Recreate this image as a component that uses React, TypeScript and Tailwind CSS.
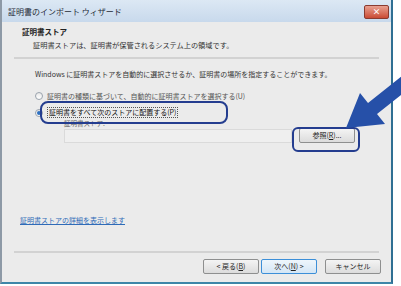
import React from 'react'

const font = { fontFamily: '"Noto Sans CJK JP", "Liberation Sans", sans-serif' }

function Radio({ checked }: { checked?: boolean }) {
  return (
    <span className="flex h-[8px] w-[8px] shrink-0 items-center justify-center rounded-full border border-[#9aa3ad] bg-gradient-to-b from-[#e8e8e8] to-white">
      {checked && <span className="h-[4px] w-[4px] rounded-full bg-[#2d6fc0]" />}
    </span>
  )
}

function Btn({ children, focus }: { children: React.ReactNode; focus?: boolean }) {
  return (
    <div
      className={
        'flex h-[15px] w-[56px] items-center justify-center rounded-[2px] border text-[7px] text-[#222] ' +
        (focus
          ? 'border-[#3c8fd8] bg-gradient-to-b from-[#eef6fc] to-[#d4e6f5]'
          : 'border-[#8e8f8f] bg-gradient-to-b from-[#f4f4f4] to-[#dcdcdc]')
      }
    >
      {children}
    </div>
  )
}

export default function App() {
  return (
    <div className="relative h-[286px] w-[401px] overflow-hidden bg-white" style={font}>
      <div className="flex h-[284px] w-[393px] flex-col border-b-2 border-l-2 border-r-2 border-b-[#3e86a8] border-l-[#8d99a6] border-r-[#2f6f93] bg-[#ebebeb]">
        {/* title bar */}
        <div className="flex h-[22px] shrink-0 items-center justify-between bg-gradient-to-b from-[#dce8f4] to-[#c8d9ec] pl-[6px] pr-[2px] pt-[2px]">
          <span className="text-[8px] text-[#1e2a36]">証明書のインポート ウィザード</span>
          <div className="flex h-[14px] w-[25px] items-center justify-center rounded-[2px] border border-[#8a3b30] bg-gradient-to-b from-[#e8a090] to-[#c94a34]">
            <span className="text-[8px] font-bold leading-none text-white">×</span>
          </div>
        </div>

        {/* header */}
        <div className="pl-[20px] pt-[4px]">
          <div className="text-[7.5px] font-bold leading-[12px] text-[#222]">証明書ストア</div>
          <div className="pl-[11px] pt-[2px] text-[7.2px] leading-[11px] text-[#333]">
            証明書ストアは、証明書が保管されるシステム上の領域です。
          </div>
        </div>
        <div className="mx-[12px] mt-[6px] h-[2px] bg-[#d2d2d2]" />

        {/* body */}
        <div className="pl-[33px] pt-[10px] text-[7px] text-[#333]">
          <div className="leading-[11px]">Windows に証明書ストアを自動的に選択させるか、証明書の場所を指定することができます。</div>
          <div className="mt-[11px] flex items-center gap-[4px] text-[#555]">
            <Radio />
            <span className="leading-[10px]">証明書の種類に基づいて、自動的に証明書ストアを選択する(U)</span>
          </div>
          <div className="mt-[6px] flex items-center gap-[4px]">
            <Radio checked />
            <span className="border border-dotted border-[#555] px-[1px] leading-[9px] text-[#111]">
              証明書をすべて次のストアに配置する(P)
            </span>
          </div>
          <div className="pl-[29px] pt-[1px]">
            <div className="mb-[2px] text-[6.5px] leading-[8px] text-[#666]">証明書ストア:</div>
            <div className="flex items-center gap-[7px]">
              <div className="h-[14px] w-[228px] border border-[#dadada] bg-[#efefef]" />
              <div className="-mt-[2px]">
                <Btn>参照(<u>R</u>)...</Btn>
              </div>
            </div>
          </div>
        </div>

        <div className="flex-1" />
        <div className="pb-[26px] pl-[18px] text-[7px] leading-[10px] text-[#2f6bb8] underline">
          証明書ストアの詳細を表示します
        </div>
        <div className="mx-[12px] h-[2px] bg-[#d2d2d2]" />
        <div className="flex justify-end gap-[2px] pb-[8px] pr-[10px] pt-[6px]">
          <Btn>&lt; 戻る(<u>B</u>)</Btn>
          <Btn focus>次へ(<u>N</u>) &gt;</Btn>
          <div className="ml-[6px]">
            <Btn>キャンセル</Btn>
          </div>
        </div>
      </div>

      {/* callout highlights */}
      <div className="pointer-events-none absolute left-[40px] top-[101px] h-[23px] w-[188px] rounded-[8px] border-2 border-[#243d8f]" />
      <div className="pointer-events-none absolute left-[292px] top-[127px] h-[25px] w-[68px] rounded-[6px] border-2 border-[#243d8f]" />
      <svg className="pointer-events-none absolute left-0 top-0" width="401" height="286">
        <polygon
          points="346,128 360,93 368,103 407,72 416,83 377,114 385,124"
          fill="#2650a8"
        />
      </svg>
    </div>
  )
}
